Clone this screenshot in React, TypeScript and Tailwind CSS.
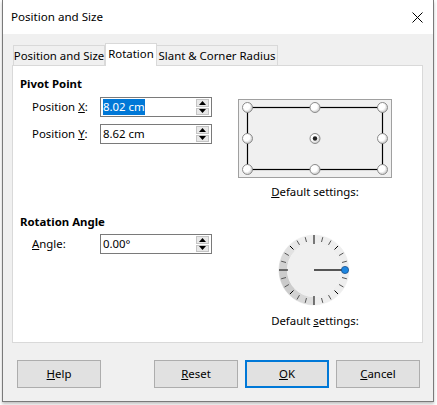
import React from 'react'

// small spin arrows on the right side of a field
function Spin() {
  return (
    <div className="flex flex-col w-[13px] h-[16px] mr-[2px] gap-[1px]">
      <div className="flex-1 bg-[#e8e8e8] border border-[#c4c4c4] flex items-center justify-center">
        <svg width="7" height="4" viewBox="0 0 7 4"><path d="M0 4 L3.5 0 L7 4 Z" fill="#000" /></svg>
      </div>
      <div className="flex-1 bg-[#e8e8e8] border border-[#c4c4c4] flex items-center justify-center">
        <svg width="7" height="4" viewBox="0 0 7 4"><path d="M0 0 L3.5 4 L7 0 Z" fill="#000" /></svg>
      </div>
    </div>
  )
}

function Field({ value, selected }: { value: string; selected?: boolean }) {
  return (
    <div className="w-[112px] h-[20px] border border-[#7a7a7a] bg-white flex items-center justify-between">
      <span className={`ml-[2px] leading-[16px] ${selected ? 'bg-[#0078d7] text-white' : ''}`}>{value}</span>
      <Spin />
    </div>
  )
}

function Row({ label, value, selected }: { label: React.ReactNode; value: string; selected?: boolean }) {
  return (
    <div className="flex items-center h-[20px]">
      <span className="ml-[12px] w-[68px]">{label}</span>
      <Field value={value} selected={selected} />
    </div>
  )
}

function Handle({ x, y, dot }: { x: number; y: number; dot?: boolean }) {
  return (
    <g>
      <circle cx={x} cy={y} r="5" fill="url(#hg)" stroke="#8c8c8c" strokeWidth="1" />
      {dot && <circle cx={x} cy={y} r="2.2" fill="#222" />}
    </g>
  )
}

function PivotBox() {
  return (
    <svg width="154" height="79" viewBox="0 0 154 79" className="block">
      <defs>
        <radialGradient id="hg" cx="0.4" cy="0.4" r="0.7">
          <stop offset="0.45" stopColor="#ffffff" />
          <stop offset="1" stopColor="#b5b5b5" />
        </radialGradient>
      </defs>
      <rect x="0.5" y="0.5" width="153" height="78" fill="#f0f0f0" stroke="#a0a0a0" />
      <rect x="9.5" y="8.5" width="135" height="62" fill="none" stroke="#000" strokeWidth="1.2" />
      <Handle x={9.5} y={8.5} />
      <Handle x={77} y={8.5} />
      <Handle x={144.5} y={8.5} />
      <Handle x={9.5} y={39.5} />
      <Handle x={77} y={39.5} dot />
      <Handle x={144.5} y={39.5} />
      <Handle x={9.5} y={70.5} />
      <Handle x={77} y={70.5} />
      <Handle x={144.5} y={70.5} />
    </svg>
  )
}

const ringShade: Record<number, string> = {
  90: '#dedede', 105: '#d8d8d8', 120: '#d2d2d2', 135: '#cccccc', 150: '#cacaca',
  165: '#cccccc', 180: '#d2d2d2', 195: '#d9d9d9', 210: '#e2e2e2', 225: '#e8e8e8',
}

function Dial() {
  const c = 36
  const pt = (r: number, deg: number) => {
    const a = (deg * Math.PI) / 180
    return [c + r * Math.cos(a), c + r * Math.sin(a)]
  }
  const segs = []
  for (let d = 0; d < 360; d += 15) {
    const [x1, y1] = pt(35, d)
    const [x2, y2] = pt(35, d + 15)
    const [x3, y3] = pt(27, d + 15)
    const [x4, y4] = pt(27, d)
    const col = ringShade[d] || '#eeeeee'
    segs.push(
      <path key={d} d={`M${x1} ${y1} A35 35 0 0 1 ${x2} ${y2} L${x3} ${y3} A27 27 0 0 0 ${x4} ${y4} Z`} fill={col} stroke={col} strokeWidth="0.5" />
    )
  }
  const ticks = []
  for (let d = 15; d < 360; d += 15) {
    const major = d % 90 === 0
    const [x1, y1] = pt(major ? 26 : 29, d)
    const [x2, y2] = pt(major ? 35 : 34, d)
    ticks.push(<line key={d} x1={x1} y1={y1} x2={x2} y2={y2} stroke={major || d % 45 === 0 ? '#000' : '#555'} strokeWidth="1" />)
  }
  return (
    <svg width="72" height="72" viewBox="0 0 72 72" className="block mr-[3px]">
      {segs}
      <circle cx={c} cy={c} r="27" fill="#f0f0f0" />
      {ticks}
      <line x1={c} y1={c} x2={c + 31} y2={c} stroke="#000" strokeWidth="1.3" />
      <circle cx={c + 31} cy={c} r="3.6" fill="#1d86e0" stroke="#1a4f8a" strokeWidth="0.8" />
    </svg>
  )
}

function Btn({ children, primary }: { children: React.ReactNode; primary?: boolean }) {
  return (
    <button
      className={`w-[84px] h-[28px] bg-[#e1e1e1] flex items-center justify-center ${primary ? 'border-2 border-[#0078d7]' : 'border border-[#adadad]'}`}
    >
      {children}
    </button>
  )
}

export default function App() {
  return (
    <div className="w-[437px] h-[405px] bg-white text-[11.4px] text-black font-['Segoe_UI','Noto_Sans',sans-serif] overflow-hidden whitespace-nowrap">
      <div className="ml-[2px] w-[432px] h-[402px] border border-t-0 border-[#7a7a7a] bg-[#f0f0f0] flex flex-col shadow-[0_2px_3px_rgba(0,0,0,0.25)]">
        {/* title bar */}
        <div className="h-[34px] bg-white flex items-center justify-between shrink-0">
          <span className="ml-[8px] text-[11.6px]">Position and Size</span>
          <svg width="11" height="11" viewBox="0 0 11 11" className="mr-[10px]">
            <path d="M0.5 0.5 L10.5 10.5 M10.5 0.5 L0.5 10.5" stroke="#000" strokeWidth="1" />
          </svg>
        </div>

        <div className="px-[9px] pt-[8px] flex flex-col">
          {/* tabs */}
          <div className="flex items-end h-[23px] ml-[1px] relative z-10">
            <div className="w-[92px] h-[20px] border border-b-0 border-[#d9d9d9] flex items-center justify-center">Position and Size</div>
            <div className="w-[52px] h-[23px] border border-b-0 border-[#d9d9d9] bg-white flex items-center justify-center -mb-[1px] pb-[2px]">Rotation</div>
            <div className="w-[121px] h-[20px] border border-b-0 border-l-0 border-[#d9d9d9] flex items-center justify-center">Slant &amp; Corner Radius</div>
          </div>

          {/* tab page */}
          <div className="w-[411px] h-[278px] bg-white border border-[#d9d9d9] flex flex-col">
            <div className="flex items-start">
              <div className="w-[199px] pl-[7px] flex flex-col">
                <div className="mt-[10px] leading-[16px] font-bold">Pivot Point</div>
                <div className="mt-[5px]">
                  <Row label={<>Position <u>X</u>:</>} value="8.02 cm" selected />
                </div>
                <div className="mt-[7px]">
                  <Row label={<>Position <u>Y</u>:</>} value="8.62 cm" />
                </div>
              </div>
              <div className="ml-[26px] mt-[33px] flex flex-col items-center">
                <PivotBox />
                <div className="mt-[6px] leading-[16px]"><u>D</u>efault settings:</div>
              </div>
            </div>

            <div className="flex items-start mt-[14px]">
              <div className="w-[199px] pl-[7px] flex flex-col">
                <div className="leading-[16px] font-bold">Rotation Angle</div>
                <div className="mt-[4px]">
                  <Row label={<><u>A</u>ngle:</>} value="0.00°" />
                </div>
              </div>
              <div className="ml-[26px] w-[154px] mt-[20px] flex flex-col items-center">
                <Dial />
                <div className="mt-[7px] leading-[16px]">Default <u>s</u>ettings:</div>
              </div>
            </div>
          </div>

          {/* buttons */}
          <div className="flex items-center mt-[17px] ml-[5px]">
            <Btn><u>H</u>elp</Btn>
            <div className="flex-1" />
            <div className="flex gap-[7px] mr-[4px]">
              <Btn><u>R</u>eset</Btn>
              <Btn primary><u>O</u>K</Btn>
              <Btn><u>C</u>ancel</Btn>
            </div>
          </div>
        </div>
      </div>
    </div>
  )
}
